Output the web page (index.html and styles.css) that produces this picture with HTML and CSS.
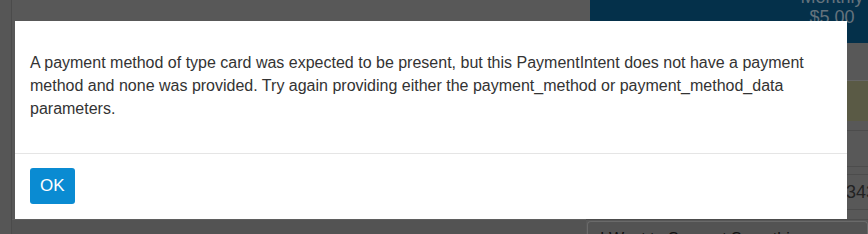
FILE: index.html
```html
<!DOCTYPE html>
<html>
<head>
<meta charset="utf-8">
<link rel="stylesheet" href="styles.css">
</head>
<body>
<div class="page">
  <aside class="rail"></aside>
  <main class="content">
    <div class="content-fill"></div>
    <div class="content-foot"></div>
  </main>
  <section class="side">
    <div class="plan">
      <div class="plan-name">Monthly</div>
      <div class="plan-price">$5.00</div>
    </div>
    <div class="gap g1"></div>
    <div class="olive"></div>
    <div class="gap g2"></div>
    <div class="gap g3"></div>
    <div class="gap g4"></div>
    <div class="total">3431</div>
    <div class="gap g5"></div>
    <div class="suggest">I Want to Suggest Something</div>
  </section>
</div>
<div class="overlay">
  <div class="modal">
    <div class="modal-body">A payment method of type card was expected to be present, but this PaymentIntent does not have a payment method and none was provided. Try again providing either the payment_method or payment_method_data parameters.</div>
    <div class="modal-footer"><button class="btn-ok">OK</button></div>
  </div>
</div>
</body>
</html>
```
FILE: styles.css
```css
html, body {
  margin: 0;
  padding: 0;
  width: 868px;
  height: 234px;
  overflow: hidden;
  background: #585858;
  font-family: "Liberation Sans", Arial, sans-serif;
}
.page {
  display: flex;
  height: 234px;
}
.rail {
  width: 11px;
  flex: none;
  background: #565656;
  border-right: 1px solid #4b4b4b;
}
.content {
  width: 574px;
  flex: none;
  display: flex;
  flex-direction: column;
}
.content-fill {
  height: 219px;
  flex: none;
  border-bottom: 1px solid #5f5f5f;
}
.content-foot {
  flex: 1;
  background: #535353;
}
.side {
  flex: 1;
  display: flex;
  flex-direction: column;
  overflow: hidden;
}
.plan {
  height: 43px;
  margin-left: 4px;
  background: #04304a;
  color: #65737d;
  text-align: center;
  padding-left: 184px;
  box-sizing: border-box;
  width: 300px;
  flex: none;
}
.plan-name {
  font-size: 18px;
  line-height: 18px;
  margin-top: -12px;
}
.plan-price {
  font-size: 18px;
  line-height: 18px;
  margin-top: 2px;
}
.gap { flex: none; }
.g1 { height: 37px; border-bottom: 1px solid #666; }
.olive { height: 40px; flex: none; background: #5a5a45; }
.g2 { height: 9px; border-bottom: 1px solid #4c4c4c; }
.g3 { height: 35px; border-bottom: 1px solid #4c4c4c; }
.g4 { height: 7px; border-bottom: 1px solid #4c4c4c; }
.total {
  height: 35px;
  flex: none;
  border-bottom: 1px solid #4c4c4c;
  box-sizing: border-box;
  padding-left: 260px;
  font-size: 18px;
  line-height: 35px;
  color: #222;
  white-space: nowrap;
}
.g5 { height: 9px; border-bottom: 1px solid #4c4c4c; background: #585858; }
.suggest {
  flex: 1;
  background: #535353;
  margin-left: 1px;
  margin-top: 1px;
  border: 1px solid #6a6a6a;
  border-bottom: none;
  border-radius: 4px 4px 0 0;
  padding: 8px 12px 0;
  font-size: 16px;
  color: #111;
  white-space: nowrap;
}
.overlay {
  position: fixed;
  inset: 0;
}
.modal {
  position: absolute;
  left: 15px;
  top: 21px;
  width: 832px;
  height: 198px;
  background: #fff;
  display: flex;
  flex-direction: column;
}
.modal-body {
  height: 132px;
  box-sizing: border-box;
  padding: 30px 15px 0;
  font-size: 16px;
  line-height: 23px;
  color: #333;
}
.modal-footer {
  border-top: 1px solid #e5e5e5;
  padding: 14px 15px 0;
  display: flex;
}
.btn-ok {
  height: 36px;
  padding: 0 10px;
  border: none;
  border-radius: 3px;
  background: #0a8bd2;
  color: #fff;
  font-family: "Liberation Sans", Arial, sans-serif;
  font-size: 17px;
}
```
